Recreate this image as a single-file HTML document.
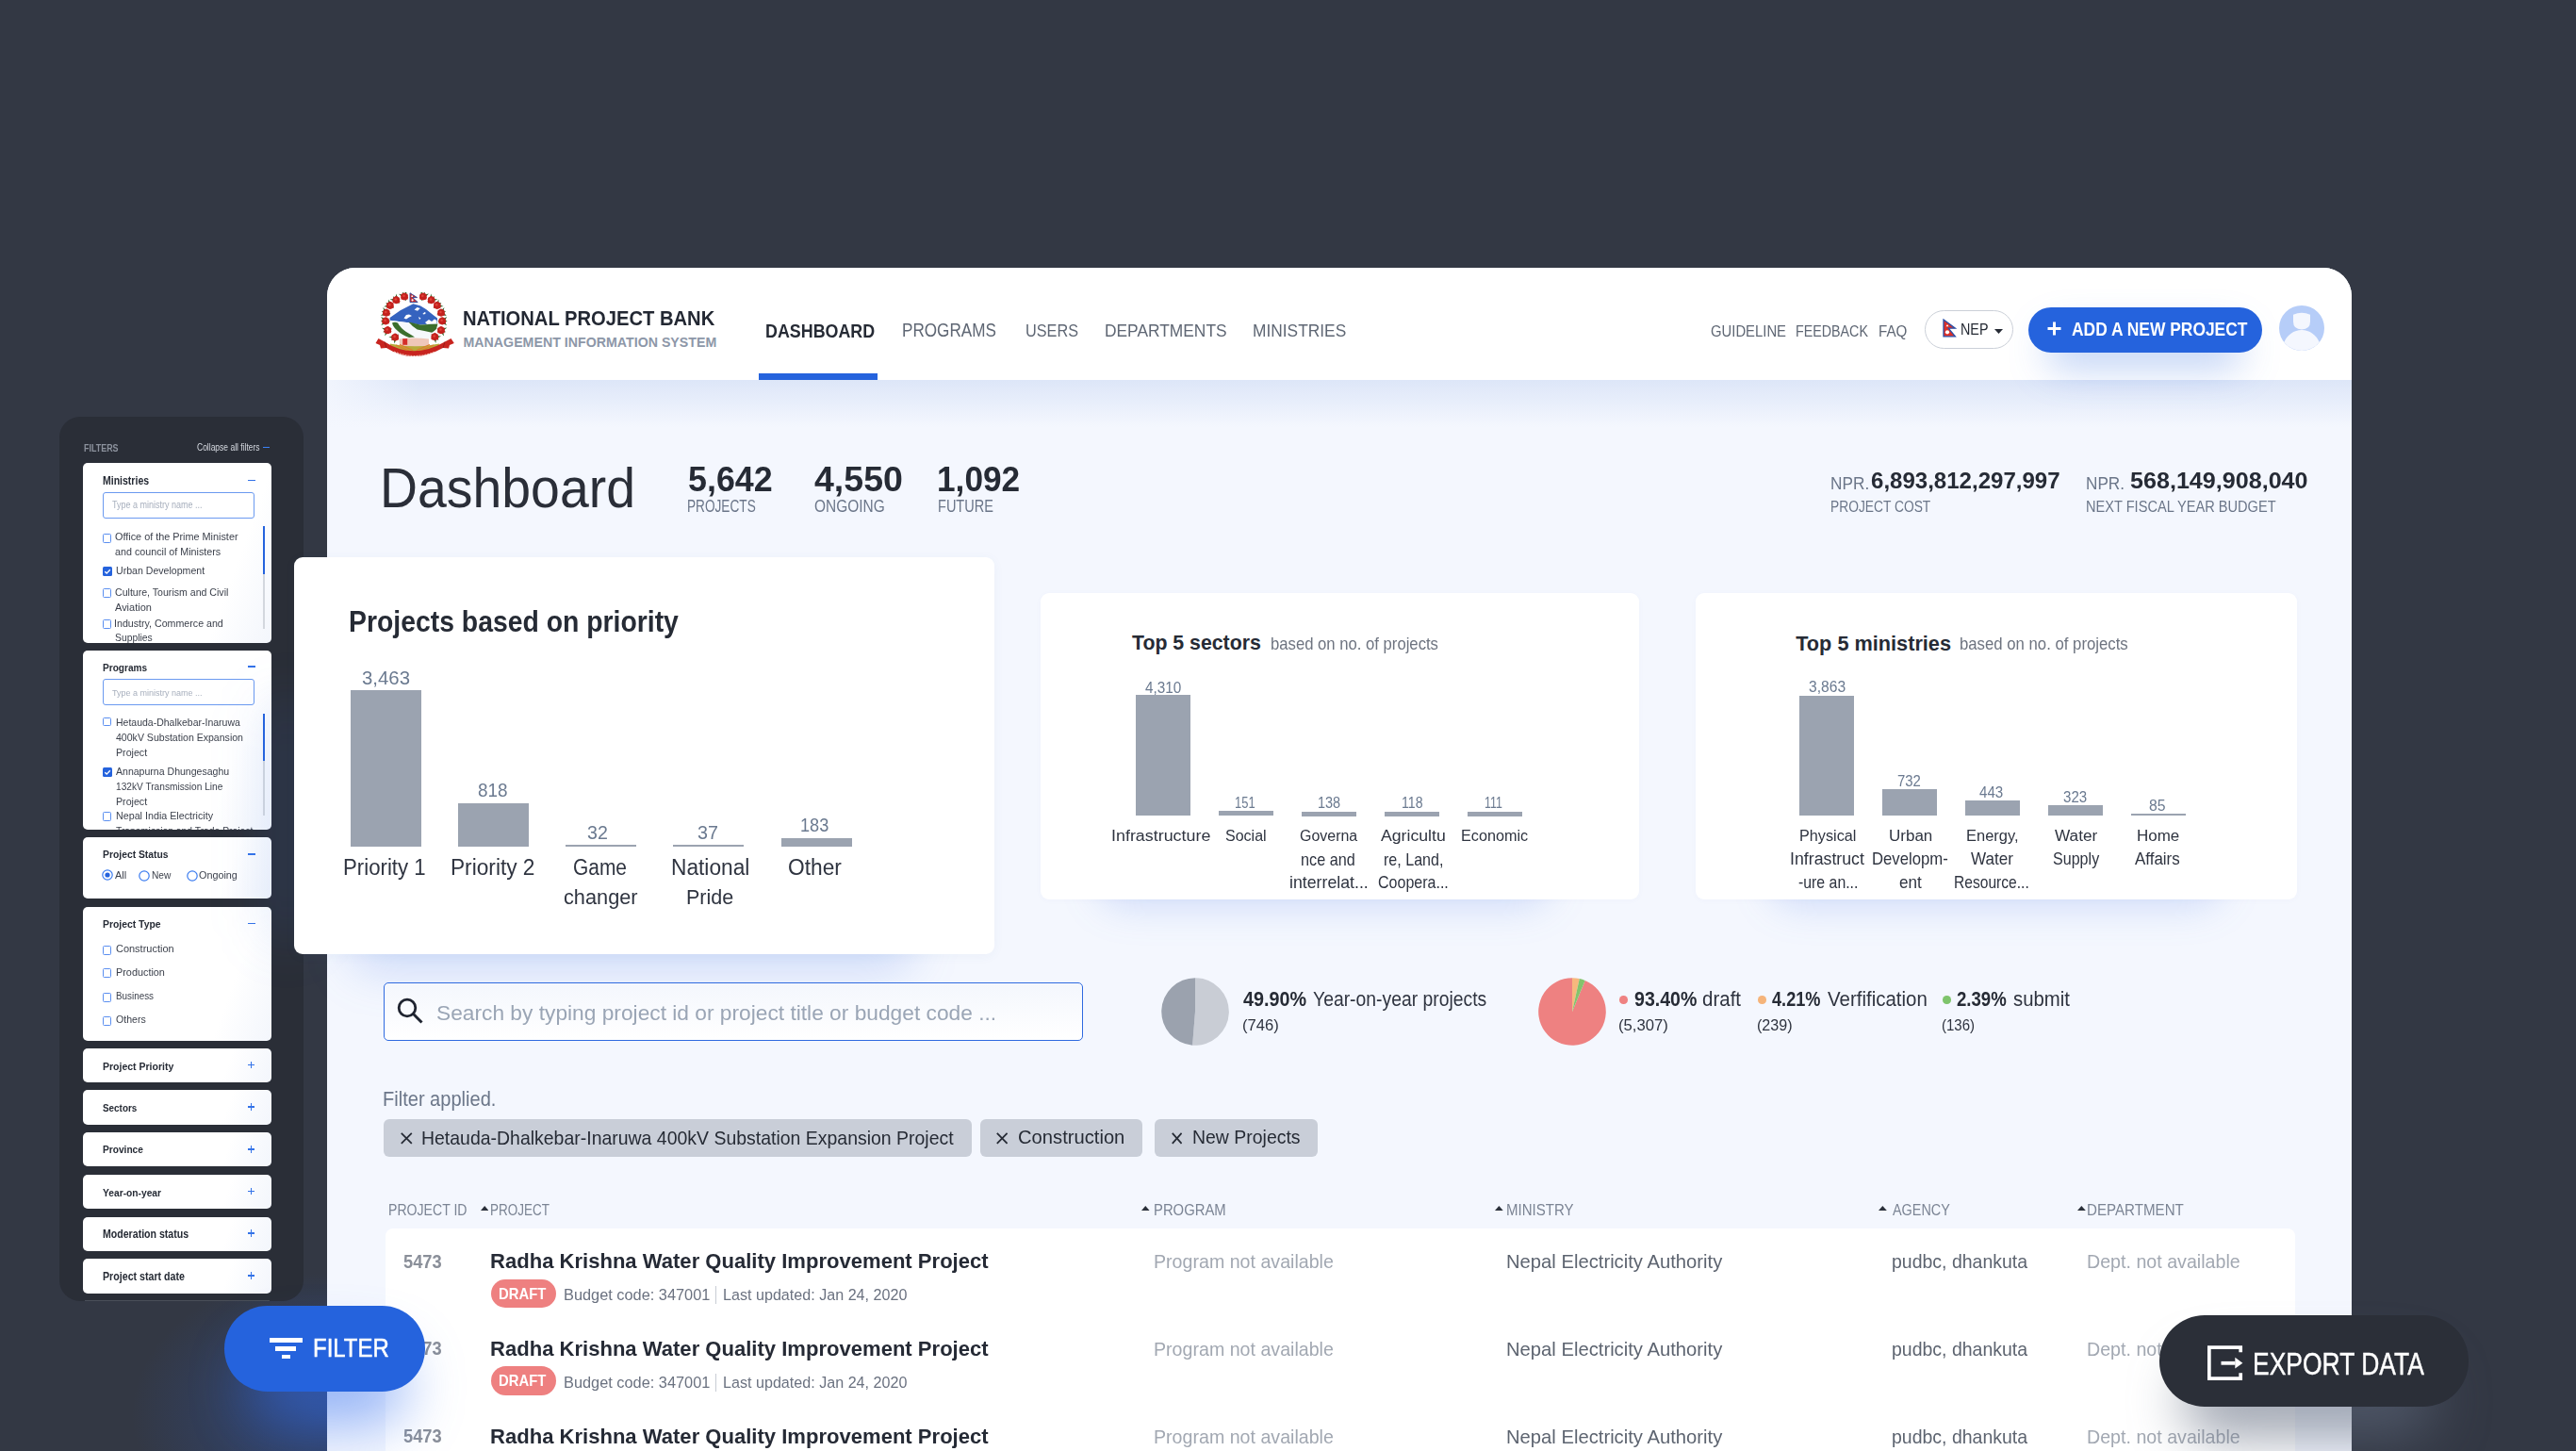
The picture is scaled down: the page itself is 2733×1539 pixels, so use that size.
<!DOCTYPE html>
<html><head><meta charset="utf-8"><style>
html,body{margin:0;padding:0;}
body{width:2733px;height:1539px;overflow:hidden;position:relative;background:#333844;font-family:'Liberation Sans', sans-serif;}
.t{position:absolute;white-space:nowrap;line-height:1;transform-origin:0 0;}
.a{position:absolute;box-sizing:border-box;}
</style></head><body>
<div class="a" style="left:0.0px;top:0.0px;width:2733.0px;height:1539.0px;background:radial-gradient(ellipse 200px 150px at 340px 1500px, rgba(45,90,190,0.42), rgba(45,90,190,0) 100%);"></div>
<div class="a" style="left:347.0px;top:284.0px;width:2148.0px;height:1255.0px;background:#f4f7fe;border-radius:30px 30px 0 0;overflow:hidden;">
<div class="a" style="left:0.0px;top:0.0px;width:2148.0px;height:119.0px;background:#fff;"></div>
<div class="a" style="left:0.0px;top:119.0px;width:2148.0px;height:50.0px;background:linear-gradient(#dde6f8,rgba(244,247,254,0));"></div>
<div class="a" style="left:0.0px;top:119.0px;width:100.0px;height:50.0px;background:linear-gradient(to right,rgba(244,247,254,0.85),rgba(244,247,254,0));"></div>
<div class="a" style="left:458.0px;top:111.5px;width:126.0px;height:7.8px;background:#2563dd;"></div>
</div>
<div class="t" style="left:490.5px;top:327.9px;font-size:21.43px;font-weight:bold;color:#232833;transform:scaleX(0.9422);">NATIONAL PROJECT BANK</div>
<div class="t" style="left:491.5px;top:356.3px;font-size:14.20px;font-weight:bold;color:#8d97a8;letter-spacing:0.01px;">MANAGEMENT INFORMATION SYSTEM</div>
<div class="t" style="left:811.5px;top:340.5px;font-size:20.14px;font-weight:bold;color:#262b35;transform:scaleX(0.8880);">DASHBOARD</div>
<div class="t" style="left:957.1px;top:341.0px;font-size:19.43px;color:#5f6774;transform:scaleX(0.8818);">PROGRAMS</div>
<div class="t" style="left:1087.9px;top:341.2px;font-size:19.14px;color:#5f6774;transform:scaleX(0.8498);">USERS</div>
<div class="t" style="left:1171.6px;top:341.2px;font-size:19.14px;color:#5f6774;transform:scaleX(0.9079);">DEPARTMENTS</div>
<div class="t" style="left:1329.2px;top:341.2px;font-size:19.14px;color:#5f6774;transform:scaleX(0.9063);">MINISTRIES</div>
<div class="t" style="left:1814.9px;top:343.4px;font-size:16.43px;color:#5f6774;transform:scaleX(0.9041);">GUIDELINE</div>
<div class="t" style="left:1905.1px;top:343.4px;font-size:16.43px;color:#5f6774;transform:scaleX(0.8687);">FEEDBACK</div>
<div class="t" style="left:1993.4px;top:343.4px;font-size:16.43px;color:#5f6774;transform:scaleX(0.9241);">FAQ</div>
<div class="a" style="left:2042.0px;top:329.0px;width:94.0px;height:41.0px;border:1.8px solid #cbd0d8;border-radius:21px;background:#fff;"></div>
<svg class="a" style="left:2060.5px;top:338.3px;" width="15" height="20" viewBox="0 0 15 20"><path d="M1 1 L13.4 10.2 H6.2 L13.4 18.8 H1 Z" fill="#dd2f27" stroke="#2a50a8" stroke-width="1.3" stroke-linejoin="miter"/><path d="M5 6 L6.4 8.2 H3.6 Z" fill="#fff"/><circle cx="5" cy="14.3" r="2.1" fill="#fff"/></svg>
<div class="t" style="left:2079.5px;top:342.2px;font-size:16.57px;color:#262b35;transform:scaleX(0.8665);">NEP</div>
<svg class="a" style="left:2116.0px;top:349.0px;" width="9" height="5" viewBox="0 0 9 5"><path d="M0 0 H9 L4.5 5 Z" fill="#262b35"/></svg>
<div class="a" style="left:2170.0px;top:350.0px;width:210.0px;height:40.0px;background:rgba(37,99,221,0.3);filter:blur(20px);border-radius:20px;"></div>
<div class="a" style="left:2152.0px;top:326.0px;width:248.0px;height:48.0px;background:#2563dd;border-radius:24px;"></div>
<svg class="a" style="left:2172.0px;top:341.0px;" width="15" height="15" viewBox="0 0 15 15"><path d="M7.5 0.5 V14.5 M0.5 7.5 H14.5" stroke="#fff" stroke-width="3"/></svg>
<div class="t" style="left:2197.5px;top:339.6px;font-size:19.86px;font-weight:bold;color:#ffffff;transform:scaleX(0.8771);">ADD A NEW PROJECT</div>
<svg class="a" style="left:2418.0px;top:324.0px;" width="48" height="48" viewBox="0 0 48 48"><circle cx="24" cy="24" r="24" fill="#b6cdf8"/><path d="M15 9.8 Q24 5.8 33 9.8 V17 Q33 25.4 24 25.4 Q15 25.4 15 17 Z" fill="#f4f7fe"/><path d="M5.3 39 A20 20 0 0 1 42.7 39 A24 24 0 0 1 5.3 39 Z" fill="#f4f7fe"/></svg>
<svg class="a" style="left:398.0px;top:310.0px;" width="84" height="72" viewBox="0 0 84 72"><path d="M15.6 27 L26.7 19.2 L35.4 14.8 L40.4 12.3 L47.8 14.2 L54 17.9 L60.2 22.9 L66 27.5 L66 33 L47.8 34.7 L35.4 32.2 L19.3 30.3 L15.6 29.7 Z" fill="#3563bf"/><path d="M30.5 27.5 L33 24 L36 23.5 L39 25 L36 26.5 L33 28.5 Z M41.6 18.5 L44.5 16 L47.8 17 L45 19.8 Z M50.3 23 L52.5 21 L54 22 L52 23.5 Z M46 26 L48.5 27.5 L47 29 Z M53 32 L57 29 L60 31 L63 28.5 L65.5 30 L65.5 33 L55 34 Z" fill="#fff"/><path d="M19.3 30.3 L35.4 32.2 L47.8 34.7 L66 33 L62 49 L21 49 Z" fill="#f6f9fc"/><path d="M18 32.5 Q21 31 24 32.5 Q27 38 33 42 Q38 45 42 47.5 L36 48 Q28 45 24 41 Q19 37 18 32.5 Z" fill="#3b6e2c"/><path d="M35.4 31.6 Q42 33 48 34.5 Q57 34 66.4 33.4 L65 39 Q62 42 60.2 42.7 Q52 41 44.7 39.6 Q39 36 35.4 31.6 Z" fill="#3b6e2c"/><path d="M25.5 49.5 Q40 47.5 57 49.5 L57 56.5 Q40 59 26 57 Z" fill="#efc7b9"/><path d="M29.2 49.2 L34.2 49.2 L34.2 55.8 L29.2 55.8 Z" fill="#d42f2b"/><path d="M15.6 54.5 Q42 60 68.3 54.5 Q66 63 56 64 Q42 66 28 64 Q17 63 15.6 54.5 Z" fill="#b7ab3c"/><path d="M22 56 L38 63 M26 55.5 L40 61.5 M62 56 L46 63 M58 55.5 L44 61.5" stroke="#e07a2c" stroke-width="1.3"/><path d="M31.9 2.9 L24.9 1.8 L30.3 6.3 Z" fill="#2e6a2b"/><path d="M32.9 5.3 L33.5 -1.8 L29.3 3.9 Z" fill="#2e6a2b"/><path d="M32.9 3.9 L29.0 -0.5 L29.3 5.3 Z" fill="#2e6a2b"/><path d="M29.3 5.3 L33.0 9.2 L32.9 3.9 Z" fill="#2e6a2b"/><path d="M22.6 6.4 L15.6 7.6 L22.2 10.2 Z" fill="#2e6a2b"/><path d="M24.3 8.4 L22.6 1.5 L20.5 8.2 Z" fill="#2e6a2b"/><path d="M23.8 7.0 L18.8 4.2 L21.0 9.6 Z" fill="#2e6a2b"/><path d="M21.0 9.6 L25.7 12.0 L23.8 7.0 Z" fill="#2e6a2b"/><path d="M15.5 12.1 L9.2 15.3 L16.3 15.9 Z" fill="#2e6a2b"/><path d="M17.7 13.5 L14.1 7.4 L14.1 14.5 Z" fill="#2e6a2b"/><path d="M16.9 12.4 L11.2 11.1 L14.9 15.6 Z" fill="#2e6a2b"/><path d="M14.9 15.6 L20.1 16.6 L16.9 12.4 Z" fill="#2e6a2b"/><path d="M11.0 20.1 L5.9 24.9 L12.8 23.5 Z" fill="#2e6a2b"/><path d="M13.5 20.8 L8.3 16.0 L10.3 22.8 Z" fill="#2e6a2b"/><path d="M12.4 20.0 L6.6 20.3 L11.4 23.6 Z" fill="#2e6a2b"/><path d="M11.4 23.6 L16.7 23.1 L12.4 20.0 Z" fill="#2e6a2b"/><path d="M9.9 29.1 L6.3 35.2 L12.5 31.9 Z" fill="#2e6a2b"/><path d="M12.5 29.1 L6.1 25.9 L9.9 31.9 Z" fill="#2e6a2b"/><path d="M11.2 28.6 L5.7 30.6 L11.2 32.4 Z" fill="#2e6a2b"/><path d="M11.2 32.4 L16.2 30.4 L11.2 28.6 Z" fill="#2e6a2b"/><path d="M11.6 39.4 L10.2 46.4 L15.0 41.2 Z" fill="#2e6a2b"/><path d="M14.0 38.5 L7.0 37.7 L12.6 42.1 Z" fill="#2e6a2b"/><path d="M12.6 38.5 L8.1 42.2 L14.0 42.1 Z" fill="#2e6a2b"/><path d="M14.0 42.1 L18.0 38.6 L12.6 38.5 Z" fill="#2e6a2b"/><path d="M19.3 47.5 L20.5 54.5 L23.1 47.9 Z" fill="#2e6a2b"/><path d="M21.3 45.8 L14.4 47.5 L21.1 49.6 Z" fill="#2e6a2b"/><path d="M20.0 46.3 L17.1 51.3 L22.4 49.1 Z" fill="#2e6a2b"/><path d="M22.5 49.1 L25.0 44.4 L19.9 46.3 Z" fill="#2e6a2b"/><path d="M52.7 3.9 L48.3 -1.7 L49.1 5.3 Z" fill="#2e6a2b"/><path d="M51.8 6.3 L57.0 1.5 L50.0 2.9 Z" fill="#2e6a2b"/><path d="M52.7 5.3 L52.8 -0.6 L49.1 3.9 Z" fill="#2e6a2b"/><path d="M49.1 3.9 L49.2 9.3 L52.7 5.3 Z" fill="#2e6a2b"/><path d="M61.5 8.2 L59.2 1.5 L57.7 8.4 Z" fill="#2e6a2b"/><path d="M59.8 10.2 L66.3 7.4 L59.4 6.4 Z" fill="#2e6a2b"/><path d="M61.1 9.5 L63.1 4.1 L58.1 7.1 Z" fill="#2e6a2b"/><path d="M58.1 7.1 L56.4 12.1 L61.1 9.5 Z" fill="#2e6a2b"/><path d="M67.6 14.4 L67.4 7.4 L64.0 13.6 Z" fill="#2e6a2b"/><path d="M65.5 15.9 L72.5 15.1 L66.1 12.1 Z" fill="#2e6a2b"/><path d="M66.8 15.6 L70.4 11.0 L64.8 12.4 Z" fill="#2e6a2b"/><path d="M64.8 12.4 L61.6 16.8 L66.8 15.6 Z" fill="#2e6a2b"/><path d="M71.6 22.8 L73.5 16.0 L68.4 20.8 Z" fill="#2e6a2b"/><path d="M69.1 23.5 L76.1 24.9 L70.9 20.1 Z" fill="#2e6a2b"/><path d="M70.5 23.6 L75.3 20.3 L69.5 20.0 Z" fill="#2e6a2b"/><path d="M69.5 20.0 L65.2 23.2 L70.5 23.6 Z" fill="#2e6a2b"/><path d="M72.5 31.9 L76.3 25.9 L69.9 29.1 Z" fill="#2e6a2b"/><path d="M69.9 31.9 L76.1 35.2 L72.5 29.1 Z" fill="#2e6a2b"/><path d="M71.2 32.4 L76.7 30.6 L71.2 28.6 Z" fill="#2e6a2b"/><path d="M71.2 28.6 L66.2 30.4 L71.2 32.4 Z" fill="#2e6a2b"/><path d="M70.7 42.0 L76.3 37.6 L69.3 38.6 Z" fill="#2e6a2b"/><path d="M68.3 41.2 L73.1 46.4 L71.7 39.4 Z" fill="#2e6a2b"/><path d="M69.4 42.1 L75.2 42.2 L70.6 38.5 Z" fill="#2e6a2b"/><path d="M70.6 38.5 L65.3 38.6 L69.4 42.1 Z" fill="#2e6a2b"/><path d="M63.5 49.2 L70.1 46.8 L63.1 45.4 Z" fill="#2e6a2b"/><path d="M61.4 47.6 L64.3 54.0 L65.2 47.0 Z" fill="#2e6a2b"/><path d="M62.1 48.8 L67.6 50.7 L64.5 45.8 Z" fill="#2e6a2b"/><path d="M64.5 45.8 L59.4 44.2 L62.1 48.8 Z" fill="#2e6a2b"/><circle cx="29.5" cy="3.5" r="2.2" fill="#c4221e"/><circle cx="32.7" cy="3.5" r="2.2" fill="#c4221e"/><circle cx="31.1" cy="2.6" r="2.2" fill="#c4221e"/><circle cx="29.3" cy="5.7" r="2.2" fill="#c4221e"/><circle cx="32.9" cy="5.7" r="2.2" fill="#c4221e"/><circle cx="31.1" cy="6.3" r="2.2" fill="#c4221e"/><circle cx="31.1" cy="4.6" r="2.2" fill="#c4221e"/><circle cx="30.5" cy="3.8" r="1.3" fill="#e0443a"/><circle cx="20.8" cy="7.2" r="2.2" fill="#c4221e"/><circle cx="24.0" cy="7.2" r="2.2" fill="#c4221e"/><circle cx="22.4" cy="6.3" r="2.2" fill="#c4221e"/><circle cx="20.6" cy="9.4" r="2.2" fill="#c4221e"/><circle cx="24.2" cy="9.4" r="2.2" fill="#c4221e"/><circle cx="22.4" cy="10.0" r="2.2" fill="#c4221e"/><circle cx="22.4" cy="8.3" r="2.2" fill="#c4221e"/><circle cx="21.8" cy="7.5" r="1.3" fill="#e0443a"/><circle cx="14.3" cy="12.9" r="2.2" fill="#c4221e"/><circle cx="17.5" cy="12.9" r="2.2" fill="#c4221e"/><circle cx="15.9" cy="12.0" r="2.2" fill="#c4221e"/><circle cx="14.1" cy="15.1" r="2.2" fill="#c4221e"/><circle cx="17.7" cy="15.1" r="2.2" fill="#c4221e"/><circle cx="15.9" cy="15.7" r="2.2" fill="#c4221e"/><circle cx="15.9" cy="14.0" r="2.2" fill="#c4221e"/><circle cx="15.3" cy="13.2" r="1.3" fill="#e0443a"/><circle cx="10.3" cy="20.7" r="2.2" fill="#c4221e"/><circle cx="13.5" cy="20.7" r="2.2" fill="#c4221e"/><circle cx="11.9" cy="19.8" r="2.2" fill="#c4221e"/><circle cx="10.1" cy="22.9" r="2.2" fill="#c4221e"/><circle cx="13.7" cy="22.9" r="2.2" fill="#c4221e"/><circle cx="11.9" cy="23.5" r="2.2" fill="#c4221e"/><circle cx="11.9" cy="21.8" r="2.2" fill="#c4221e"/><circle cx="11.3" cy="21.0" r="1.3" fill="#e0443a"/><circle cx="9.6" cy="29.4" r="2.2" fill="#c4221e"/><circle cx="12.8" cy="29.4" r="2.2" fill="#c4221e"/><circle cx="11.2" cy="28.5" r="2.2" fill="#c4221e"/><circle cx="9.4" cy="31.6" r="2.2" fill="#c4221e"/><circle cx="13.0" cy="31.6" r="2.2" fill="#c4221e"/><circle cx="11.2" cy="32.2" r="2.2" fill="#c4221e"/><circle cx="11.2" cy="30.5" r="2.2" fill="#c4221e"/><circle cx="10.6" cy="29.7" r="1.3" fill="#e0443a"/><circle cx="11.7" cy="39.2" r="2.2" fill="#c4221e"/><circle cx="14.9" cy="39.2" r="2.2" fill="#c4221e"/><circle cx="13.3" cy="38.3" r="2.2" fill="#c4221e"/><circle cx="11.5" cy="41.4" r="2.2" fill="#c4221e"/><circle cx="15.1" cy="41.4" r="2.2" fill="#c4221e"/><circle cx="13.3" cy="42.0" r="2.2" fill="#c4221e"/><circle cx="13.3" cy="40.3" r="2.2" fill="#c4221e"/><circle cx="12.7" cy="39.5" r="1.3" fill="#e0443a"/><circle cx="19.6" cy="46.6" r="2.2" fill="#c4221e"/><circle cx="22.8" cy="46.6" r="2.2" fill="#c4221e"/><circle cx="21.2" cy="45.7" r="2.2" fill="#c4221e"/><circle cx="19.4" cy="48.8" r="2.2" fill="#c4221e"/><circle cx="23.0" cy="48.8" r="2.2" fill="#c4221e"/><circle cx="21.2" cy="49.4" r="2.2" fill="#c4221e"/><circle cx="21.2" cy="47.7" r="2.2" fill="#c4221e"/><circle cx="20.6" cy="46.9" r="1.3" fill="#e0443a"/><circle cx="49.3" cy="3.5" r="2.2" fill="#c4221e"/><circle cx="52.5" cy="3.5" r="2.2" fill="#c4221e"/><circle cx="50.9" cy="2.6" r="2.2" fill="#c4221e"/><circle cx="49.1" cy="5.7" r="2.2" fill="#c4221e"/><circle cx="52.7" cy="5.7" r="2.2" fill="#c4221e"/><circle cx="50.9" cy="6.3" r="2.2" fill="#c4221e"/><circle cx="50.9" cy="4.6" r="2.2" fill="#c4221e"/><circle cx="50.3" cy="3.8" r="1.3" fill="#e0443a"/><circle cx="58.0" cy="7.2" r="2.2" fill="#c4221e"/><circle cx="61.2" cy="7.2" r="2.2" fill="#c4221e"/><circle cx="59.6" cy="6.3" r="2.2" fill="#c4221e"/><circle cx="57.8" cy="9.4" r="2.2" fill="#c4221e"/><circle cx="61.4" cy="9.4" r="2.2" fill="#c4221e"/><circle cx="59.6" cy="10.0" r="2.2" fill="#c4221e"/><circle cx="59.6" cy="8.3" r="2.2" fill="#c4221e"/><circle cx="59.0" cy="7.5" r="1.3" fill="#e0443a"/><circle cx="64.2" cy="12.9" r="2.2" fill="#c4221e"/><circle cx="67.4" cy="12.9" r="2.2" fill="#c4221e"/><circle cx="65.8" cy="12.0" r="2.2" fill="#c4221e"/><circle cx="64.0" cy="15.1" r="2.2" fill="#c4221e"/><circle cx="67.6" cy="15.1" r="2.2" fill="#c4221e"/><circle cx="65.8" cy="15.7" r="2.2" fill="#c4221e"/><circle cx="65.8" cy="14.0" r="2.2" fill="#c4221e"/><circle cx="65.2" cy="13.2" r="1.3" fill="#e0443a"/><circle cx="68.4" cy="20.7" r="2.2" fill="#c4221e"/><circle cx="71.6" cy="20.7" r="2.2" fill="#c4221e"/><circle cx="70.0" cy="19.8" r="2.2" fill="#c4221e"/><circle cx="68.2" cy="22.9" r="2.2" fill="#c4221e"/><circle cx="71.8" cy="22.9" r="2.2" fill="#c4221e"/><circle cx="70.0" cy="23.5" r="2.2" fill="#c4221e"/><circle cx="70.0" cy="21.8" r="2.2" fill="#c4221e"/><circle cx="69.4" cy="21.0" r="1.3" fill="#e0443a"/><circle cx="69.6" cy="29.4" r="2.2" fill="#c4221e"/><circle cx="72.8" cy="29.4" r="2.2" fill="#c4221e"/><circle cx="71.2" cy="28.5" r="2.2" fill="#c4221e"/><circle cx="69.4" cy="31.6" r="2.2" fill="#c4221e"/><circle cx="73.0" cy="31.6" r="2.2" fill="#c4221e"/><circle cx="71.2" cy="32.2" r="2.2" fill="#c4221e"/><circle cx="71.2" cy="30.5" r="2.2" fill="#c4221e"/><circle cx="70.6" cy="29.7" r="1.3" fill="#e0443a"/><circle cx="68.4" cy="39.2" r="2.2" fill="#c4221e"/><circle cx="71.6" cy="39.2" r="2.2" fill="#c4221e"/><circle cx="70.0" cy="38.3" r="2.2" fill="#c4221e"/><circle cx="68.2" cy="41.4" r="2.2" fill="#c4221e"/><circle cx="71.8" cy="41.4" r="2.2" fill="#c4221e"/><circle cx="70.0" cy="42.0" r="2.2" fill="#c4221e"/><circle cx="70.0" cy="40.3" r="2.2" fill="#c4221e"/><circle cx="69.4" cy="39.5" r="1.3" fill="#e0443a"/><circle cx="61.7" cy="46.2" r="2.2" fill="#c4221e"/><circle cx="64.9" cy="46.2" r="2.2" fill="#c4221e"/><circle cx="63.3" cy="45.3" r="2.2" fill="#c4221e"/><circle cx="61.5" cy="48.4" r="2.2" fill="#c4221e"/><circle cx="65.1" cy="48.4" r="2.2" fill="#c4221e"/><circle cx="63.3" cy="49.0" r="2.2" fill="#c4221e"/><circle cx="63.3" cy="47.3" r="2.2" fill="#c4221e"/><circle cx="62.7" cy="46.5" r="1.3" fill="#e0443a"/><path d="M0.5 54 L3.5 49 L10 52.5 Q40 72 74 52.5 L80.5 49 L83.8 54 L79 56 L78 59.5 L72 59 Q40 77 12 59 L6 59.5 L5 56 Z" fill="#c8241f"/><path d="M12 59 L10 52.5 M72 59 L74 52.5" stroke="#8e1815" stroke-width="0.8"/><path d="M20 63 Q42 72 64 63" stroke="#f2c9c0" stroke-width="1.1" stroke-dasharray="2 1" fill="none"/><path d="M37 0.8 L37 10.6 L45.2 10.6 L39.6 5.6 L44.5 5.6 Z" fill="#d42d2a" stroke="#2a4a9a" stroke-width="0.9"/><circle cx="39.2" cy="4.2" r="0.9" fill="#fff"/><circle cx="39.6" cy="8.3" r="1.1" fill="#fff"/></svg>
<div class="a" style="left:63.0px;top:442.0px;width:259.0px;height:938.0px;background:#2a2e37;border-radius:22px;"></div>
<div class="t" style="left:88.5px;top:469.6px;font-size:11.43px;font-weight:bold;color:#8c929d;transform:scaleX(0.7818);">FILTERS</div>
<div class="t" style="left:209.4px;top:469.5px;font-size:10.00px;color:#d6dae1;transform:scaleX(0.8499);">Collapse all filters</div>
<div class="a" style="left:279.0px;top:473.5px;width:7.0px;height:1.6px;background:#3b82f6;"></div>
<div class="a" style="left:88.0px;top:491.0px;width:200.0px;height:191.0px;background:linear-gradient(110deg,#fff 75%,#f3f6fc);border-radius:5px;"></div>
<div class="t" style="left:108.8px;top:504.2px;font-size:12.43px;font-weight:bold;color:#262b35;transform:scaleX(0.8464);">Ministries</div>
<div class="a" style="left:263.0px;top:508.8px;width:7.5px;height:1.5px;background:#3473e8;"></div>
<div class="a" style="left:108.6px;top:521.5px;width:161.6px;height:28.1px;border:1.4px solid #6b9af0;border-radius:3px;background:#fff;"></div>
<div class="t" style="left:119.4px;top:530.8px;font-size:10.14px;color:#a7afbd;transform:scaleX(0.8897);">Type a ministry name ...</div>
<div class="a" style="left:88.0px;top:552.0px;width:200.0px;height:130.0px;overflow:hidden;">
<div class="a" style="left:20.6px;top:14.0px;width:9.8px;height:9.8px;border:1.3px solid #5b8ff0;border-radius:1.5px;background:#fff;"></div>
<div class="t" style="left:33.6px;top:12.2px;font-size:11.14px;color:#3a3f4a;transform:scaleX(0.9743);">Office of the Prime Minister</div>
<div class="t" style="left:33.6px;top:28.0px;font-size:11.14px;color:#3a3f4a;transform:scaleX(0.9650);">and council of Ministers</div>
<svg class="a" style="left:20.6px;top:49.2px;" width="10" height="10" viewBox="0 0 10 10"><rect x="0" y="0" width="10" height="10" rx="1.5" fill="#2563dd"/><path d="M2.3 5.2 L4.2 7.1 L7.8 3.2" stroke="#fff" stroke-width="1.4" fill="none"/></svg>
<div class="t" style="left:34.6px;top:47.8px;font-size:11.43px;color:#3a3f4a;transform:scaleX(0.9269);">Urban Development</div>
<div class="a" style="left:20.6px;top:72.4px;width:9.8px;height:9.8px;border:1.3px solid #5b8ff0;border-radius:1.5px;background:#fff;"></div>
<div class="t" style="left:33.6px;top:70.3px;font-size:11.71px;color:#3a3f4a;transform:scaleX(0.9041);">Culture, Tourism and Civil</div>
<div class="t" style="left:33.6px;top:86.6px;font-size:11.14px;color:#3a3f4a;transform:scaleX(0.9875);">Aviation</div>
<div class="a" style="left:20.6px;top:105.0px;width:9.8px;height:9.8px;border:1.3px solid #5b8ff0;border-radius:1.5px;background:#fff;"></div>
<div class="t" style="left:32.7px;top:102.9px;font-size:11.71px;color:#3a3f4a;transform:scaleX(0.9097);">Industry, Commerce and</div>
<div class="t" style="left:33.6px;top:119.3px;font-size:10.57px;color:#3a3f4a;transform:scaleX(0.9792);">Supplies</div>
</div>
<div class="a" style="left:279.4px;top:558.4px;width:1.6px;height:108.3px;background:#d3d7de;"></div>
<div class="a" style="left:279.4px;top:558.4px;width:1.6px;height:50.2px;background:#2563dd;"></div>
<div class="a" style="left:88.0px;top:690.0px;width:200.0px;height:190.0px;background:linear-gradient(110deg,#fff 75%,#f3f6fc);border-radius:5px;"></div>
<div class="t" style="left:108.8px;top:703.4px;font-size:10.57px;font-weight:bold;color:#262b35;transform:scaleX(0.9548);">Programs</div>
<div class="a" style="left:263.0px;top:706.1px;width:7.5px;height:1.5px;background:#3473e8;"></div>
<div class="a" style="left:108.6px;top:720.3px;width:161.6px;height:27.9px;border:1.4px solid #6b9af0;border-radius:3px;background:#fff;"></div>
<div class="t" style="left:119.4px;top:729.5px;font-size:9.86px;color:#a7afbd;transform:scaleX(0.9147);">Type a ministry name ...</div>
<div class="a" style="left:88.0px;top:752.0px;width:200.0px;height:128.0px;overflow:hidden;">
<div class="a" style="left:20.6px;top:8.7px;width:9.8px;height:9.8px;border:1.3px solid #5b8ff0;border-radius:1.5px;background:#fff;"></div>
<div class="t" style="left:34.6px;top:9.0px;font-size:11.14px;color:#3a3f4a;transform:scaleX(0.9433);">Hetauda-Dhalkebar-Inaruwa</div>
<div class="t" style="left:34.6px;top:24.8px;font-size:11.14px;color:#3a3f4a;transform:scaleX(0.9489);">400kV Substation Expansion</div>
<div class="t" style="left:34.6px;top:41.0px;font-size:10.86px;color:#3a3f4a;transform:scaleX(0.9811);">Project</div>
<svg class="a" style="left:20.6px;top:62.3px;" width="10" height="10" viewBox="0 0 10 10"><rect x="0" y="0" width="10" height="10" rx="1.5" fill="#2563dd"/><path d="M2.3 5.2 L4.2 7.1 L7.8 3.2" stroke="#fff" stroke-width="1.4" fill="none"/></svg>
<div class="t" style="left:34.6px;top:61.1px;font-size:11.14px;color:#3a3f4a;transform:scaleX(0.9477);">Annapurna Dhungesaghu</div>
<div class="t" style="left:34.6px;top:76.9px;font-size:11.14px;color:#3a3f4a;transform:scaleX(0.9123);">132kV Transmission Line</div>
<div class="t" style="left:34.6px;top:93.1px;font-size:10.86px;color:#3a3f4a;transform:scaleX(0.9811);">Project</div>
<div class="a" style="left:20.6px;top:108.8px;width:9.8px;height:9.8px;border:1.3px solid #5b8ff0;border-radius:1.5px;background:#fff;"></div>
<div class="t" style="left:34.6px;top:107.8px;font-size:11.43px;color:#3a3f4a;transform:scaleX(0.9384);">Nepal India Electricity</div>
<div class="t" style="left:34.6px;top:123.6px;font-size:11.43px;color:#3a3f4a;transform:scaleX(0.9033);">Transmission and Trade Project</div>
</div>
<div class="a" style="left:279.4px;top:756.6px;width:1.6px;height:108.4px;background:#d3d7de;"></div>
<div class="a" style="left:279.4px;top:756.6px;width:1.6px;height:50.2px;background:#2563dd;"></div>
<div class="a" style="left:88.0px;top:888.0px;width:200.0px;height:65.0px;background:linear-gradient(110deg,#fff 75%,#f3f6fc);border-radius:5px;"></div>
<div class="t" style="left:108.8px;top:901.0px;font-size:11.57px;font-weight:bold;color:#262b35;transform:scaleX(0.8950);">Project Status</div>
<div class="a" style="left:263.0px;top:905.2px;width:7.5px;height:1.5px;background:#3473e8;"></div>
<svg class="a" style="left:108.0px;top:922.0px;" width="12" height="12" viewBox="0 0 12 12"><circle cx="6" cy="6" r="5.2" fill="#fff" stroke="#3b7cf0" stroke-width="1.2"/><circle cx="6" cy="6" r="2.6" fill="#2563dd"/></svg>
<div class="t" style="left:121.6px;top:923.1px;font-size:11.43px;color:#3a3f4a;transform:scaleX(0.9554);">All</div>
<svg class="a" style="left:147.0px;top:922.7px;" width="12" height="12" viewBox="0 0 12 12"><circle cx="6" cy="6" r="5.2" fill="#fff" stroke="#3b7cf0" stroke-width="1.2"/></svg>
<div class="t" style="left:160.7px;top:923.1px;font-size:11.43px;color:#3a3f4a;transform:scaleX(0.8906);">New</div>
<svg class="a" style="left:197.5px;top:922.7px;" width="12" height="12" viewBox="0 0 12 12"><circle cx="6" cy="6" r="5.2" fill="#fff" stroke="#3b7cf0" stroke-width="1.2"/></svg>
<div class="t" style="left:211.0px;top:923.1px;font-size:11.43px;color:#3a3f4a;transform:scaleX(0.9467);">Ongoing</div>
<div class="a" style="left:88.0px;top:962.0px;width:200.0px;height:141.5px;background:linear-gradient(110deg,#fff 75%,#f3f6fc);border-radius:5px;"></div>
<div class="t" style="left:108.8px;top:975.3px;font-size:11.43px;font-weight:bold;color:#262b35;transform:scaleX(0.9098);">Project Type</div>
<div class="a" style="left:263.0px;top:978.5px;width:7.5px;height:1.5px;background:#3473e8;"></div>
<div class="a" style="left:108.6px;top:1003.0px;width:9.8px;height:9.8px;border:1.3px solid #5b8ff0;border-radius:1.5px;background:#fff;"></div>
<div class="t" style="left:122.6px;top:1001.1px;font-size:11.14px;color:#3a3f4a;transform:scaleX(0.9861);">Construction</div>
<div class="a" style="left:108.6px;top:1027.2px;width:9.8px;height:9.8px;border:1.3px solid #5b8ff0;border-radius:1.5px;background:#fff;"></div>
<div class="t" style="left:122.6px;top:1026.2px;font-size:11.14px;color:#3a3f4a;transform:scaleX(0.9755);">Production</div>
<div class="a" style="left:108.6px;top:1052.9px;width:9.8px;height:9.8px;border:1.3px solid #5b8ff0;border-radius:1.5px;background:#fff;"></div>
<div class="t" style="left:122.6px;top:1051.3px;font-size:11.14px;color:#3a3f4a;transform:scaleX(0.8864);">Business</div>
<div class="a" style="left:108.6px;top:1078.0px;width:9.8px;height:9.8px;border:1.3px solid #5b8ff0;border-radius:1.5px;background:#fff;"></div>
<div class="t" style="left:122.6px;top:1076.4px;font-size:11.14px;color:#3a3f4a;transform:scaleX(0.9490);">Others</div>
<div class="a" style="left:88.0px;top:1112.0px;width:200.0px;height:36.0px;background:linear-gradient(110deg,#fff 75%,#f3f6fc);border-radius:5px;"></div>
<div class="t" style="left:108.6px;top:1124.7px;font-size:11.71px;font-weight:bold;color:#262b35;transform:scaleX(0.8970);">Project Priority</div>
<div class="a" style="left:262.8px;top:1128.8px;width:7.6px;height:1.5px;background:#3473e8;"></div>
<div class="a" style="left:265.9px;top:1125.7px;width:1.5px;height:7.6px;background:#3473e8;"></div>
<div class="a" style="left:88.0px;top:1156.0px;width:200.0px;height:37.0px;background:linear-gradient(110deg,#fff 75%,#f3f6fc);border-radius:5px;"></div>
<div class="t" style="left:108.6px;top:1169.3px;font-size:11.71px;font-weight:bold;color:#262b35;transform:scaleX(0.8452);">Sectors</div>
<div class="a" style="left:262.8px;top:1173.3px;width:7.6px;height:1.5px;background:#3473e8;"></div>
<div class="a" style="left:265.9px;top:1170.3px;width:1.5px;height:7.6px;background:#3473e8;"></div>
<div class="a" style="left:88.0px;top:1201.0px;width:200.0px;height:36.4px;background:linear-gradient(110deg,#fff 75%,#f3f6fc);border-radius:5px;"></div>
<div class="t" style="left:108.6px;top:1214.2px;font-size:11.29px;font-weight:bold;color:#262b35;transform:scaleX(0.9002);">Province</div>
<div class="a" style="left:262.8px;top:1218.1px;width:7.6px;height:1.5px;background:#3473e8;"></div>
<div class="a" style="left:265.9px;top:1215.0px;width:1.5px;height:7.6px;background:#3473e8;"></div>
<div class="a" style="left:88.0px;top:1246.0px;width:200.0px;height:36.2px;background:linear-gradient(110deg,#fff 75%,#f3f6fc);border-radius:5px;"></div>
<div class="t" style="left:108.6px;top:1258.6px;font-size:11.71px;font-weight:bold;color:#262b35;transform:scaleX(0.8746);">Year-on-year</div>
<div class="a" style="left:262.8px;top:1262.7px;width:7.6px;height:1.5px;background:#3473e8;"></div>
<div class="a" style="left:265.9px;top:1259.6px;width:1.5px;height:7.6px;background:#3473e8;"></div>
<div class="a" style="left:88.0px;top:1290.7px;width:200.0px;height:36.3px;background:linear-gradient(110deg,#fff 75%,#f3f6fc);border-radius:5px;"></div>
<div class="t" style="left:108.6px;top:1303.1px;font-size:12.00px;font-weight:bold;color:#262b35;transform:scaleX(0.8817);">Moderation status</div>
<div class="a" style="left:262.8px;top:1307.3px;width:7.6px;height:1.5px;background:#3473e8;"></div>
<div class="a" style="left:265.9px;top:1304.3px;width:1.5px;height:7.6px;background:#3473e8;"></div>
<div class="a" style="left:88.0px;top:1335.3px;width:200.0px;height:36.4px;background:linear-gradient(110deg,#fff 75%,#f3f6fc);border-radius:5px;"></div>
<div class="t" style="left:108.6px;top:1347.7px;font-size:12.43px;font-weight:bold;color:#262b35;transform:scaleX(0.8575);">Project start date</div>
<div class="a" style="left:262.8px;top:1352.1px;width:7.6px;height:1.5px;background:#3473e8;"></div>
<div class="a" style="left:265.9px;top:1349.0px;width:1.5px;height:7.6px;background:#3473e8;"></div>
<div class="a" style="left:90.0px;top:1378.5px;width:196.0px;height:1.2px;background:#4a4f59;"></div>
<div class="t" style="left:403.0px;top:488.9px;font-size:58.57px;color:#2a2e38;transform:scaleX(0.9458);">Dashboard</div>
<div class="t" style="left:730.3px;top:490.7px;font-size:36.00px;font-weight:bold;color:#262b35;transform:scaleX(0.9958);">5,642</div>
<div class="t" style="left:729.2px;top:529.3px;font-size:17.57px;color:#6b7689;transform:scaleX(0.7764);">PROJECTS</div>
<div class="t" style="left:864.2px;top:490.7px;font-size:36.00px;font-weight:bold;color:#262b35;transform:scaleX(1.0419);">4,550</div>
<div class="t" style="left:864.2px;top:529.3px;font-size:17.57px;color:#6b7689;transform:scaleX(0.8798);">ONGOING</div>
<div class="t" style="left:994.0px;top:490.7px;font-size:36.00px;font-weight:bold;color:#262b35;transform:scaleX(0.9786);">1,092</div>
<div class="t" style="left:995.2px;top:529.3px;font-size:17.57px;color:#6b7689;transform:scaleX(0.8273);">FUTURE</div>
<div class="t" style="left:1941.9px;top:503.9px;font-size:18.57px;color:#6b7689;transform:scaleX(0.9291);">NPR.</div>
<div class="t" style="left:1984.5px;top:497.9px;font-size:24.14px;font-weight:bold;color:#262b35;transform:scaleX(0.9969);">6,893,812,297,997</div>
<div class="t" style="left:1942.0px;top:530.0px;font-size:16.57px;color:#6b7689;transform:scaleX(0.8329);">PROJECT COST</div>
<div class="t" style="left:2213.1px;top:503.9px;font-size:18.57px;color:#6b7689;transform:scaleX(0.9244);">NPR.</div>
<div class="t" style="left:2259.6px;top:497.9px;font-size:24.14px;font-weight:bold;color:#262b35;transform:scaleX(1.0410);">568,149,908,040</div>
<div class="t" style="left:2213.1px;top:530.0px;font-size:16.57px;color:#6b7689;transform:scaleX(0.8809);">NEXT FISCAL YEAR BUDGET</div>
<div class="a" style="left:1165.0px;top:900.0px;width:480.0px;height:60.0px;background:rgba(70,120,230,0.22);filter:blur(20px);border-radius:30px;"></div>
<div class="a" style="left:1878.0px;top:900.0px;width:480.0px;height:60.0px;background:rgba(70,120,230,0.22);filter:blur(20px);border-radius:30px;"></div>
<div class="a" style="left:1104.0px;top:629.0px;width:635.0px;height:325.0px;background:#fff;border-radius:9px;box-shadow:0 1px 6px rgba(80,110,180,0.03);"></div>
<div class="a" style="left:1799.0px;top:629.0px;width:638.0px;height:325.0px;background:#fff;border-radius:9px;box-shadow:0 1px 6px rgba(80,110,180,0.03);"></div>
<div class="t" style="left:1201.0px;top:672.0px;font-size:21.29px;font-weight:bold;color:#262b35;">Top 5 sectors</div>
<div class="t" style="left:1347.9px;top:674.3px;font-size:18.57px;color:#6e7480;transform:scaleX(0.8981);">based on no. of projects</div>
<div class="a" style="left:1205.0px;top:737.3px;width:58.2px;height:128.2px;background:#9ba3b0;"></div>
<div class="a" style="left:1293.0px;top:859.6px;width:57.8px;height:5.9px;background:#9ba3b0;"></div>
<div class="a" style="left:1381.3px;top:861.0px;width:57.7px;height:4.5px;background:#9ba3b0;"></div>
<div class="a" style="left:1469.2px;top:861.0px;width:57.9px;height:4.5px;background:#9ba3b0;"></div>
<div class="a" style="left:1557.0px;top:861.0px;width:58.2px;height:4.5px;background:#9ba3b0;"></div>
<div class="t" style="left:1214.8px;top:720.9px;font-size:16.43px;color:#6b7a90;transform:scaleX(0.9333);">4,310</div>
<div class="t" style="left:1310.1px;top:843.1px;font-size:16.43px;color:#6b7a90;transform:scaleX(0.7886);">151</div>
<div class="t" style="left:1397.8px;top:844.3px;font-size:16.57px;color:#6b7a90;transform:scaleX(0.8743);">138</div>
<div class="t" style="left:1487.0px;top:844.3px;font-size:16.57px;color:#6b7a90;transform:scaleX(0.8534);">118</div>
<div class="t" style="left:1575.2px;top:844.3px;font-size:16.57px;color:#6b7a90;transform:scaleX(0.7512);">111</div>
<div class="t" style="left:1179.4px;top:878.3px;font-size:17.29px;color:#2f3440;transform:scaleX(1.0348);">Infrastructure</div>
<div class="t" style="left:1299.6px;top:878.3px;font-size:17.29px;color:#2f3440;transform:scaleX(0.9266);">Social</div>
<div class="t" style="left:1378.7px;top:878.3px;font-size:17.29px;color:#2f3440;transform:scaleX(0.9232);">Governa</div>
<div class="t" style="left:1380.4px;top:901.6px;font-size:19.00px;color:#2f3440;transform:scaleX(0.8539);">nce and</div>
<div class="t" style="left:1367.8px;top:926.6px;font-size:18.57px;color:#2f3440;transform:scaleX(0.9552);">interrelat...</div>
<div class="t" style="left:1464.6px;top:878.3px;font-size:17.29px;color:#2f3440;transform:scaleX(1.0230);">Agricultu</div>
<div class="t" style="left:1467.9px;top:901.6px;font-size:19.00px;color:#2f3440;transform:scaleX(0.8457);">re, Land,</div>
<div class="t" style="left:1462.0px;top:926.6px;font-size:18.57px;color:#2f3440;transform:scaleX(0.8630);">Coopera...</div>
<div class="t" style="left:1549.5px;top:878.3px;font-size:17.29px;color:#2f3440;transform:scaleX(0.9378);">Economic</div>
<div class="t" style="left:1905.2px;top:671.8px;font-size:21.71px;font-weight:bold;color:#262b35;">Top 5 ministries</div>
<div class="t" style="left:2078.6px;top:674.2px;font-size:18.86px;color:#6e7480;transform:scaleX(0.8878);">based on no. of projects</div>
<div class="a" style="left:1909.0px;top:737.6px;width:58.4px;height:127.9px;background:#9ba3b0;"></div>
<div class="a" style="left:1997.0px;top:837.2px;width:58.3px;height:28.3px;background:#9ba3b0;"></div>
<div class="a" style="left:2085.2px;top:849.4px;width:58.0px;height:16.1px;background:#9ba3b0;"></div>
<div class="a" style="left:2173.0px;top:853.8px;width:58.4px;height:11.7px;background:#9ba3b0;"></div>
<div class="a" style="left:2261.3px;top:862.7px;width:58.0px;height:2.8px;background:#9ba3b0;"></div>
<div class="t" style="left:1918.7px;top:721.2px;font-size:15.57px;color:#6b7a90;transform:scaleX(1.0055);">3,863</div>
<div class="t" style="left:2012.9px;top:821.3px;font-size:15.71px;color:#6b7a90;transform:scaleX(0.9503);">732</div>
<div class="t" style="left:2099.5px;top:833.0px;font-size:15.71px;color:#6b7a90;transform:scaleX(0.9635);">443</div>
<div class="t" style="left:2188.7px;top:837.5px;font-size:15.57px;color:#6b7a90;transform:scaleX(0.9680);">323</div>
<div class="t" style="left:2279.7px;top:846.6px;font-size:15.57px;color:#6b7a90;transform:scaleX(1.0147);">85</div>
<div class="t" style="left:1908.7px;top:878.4px;font-size:17.29px;color:#2f3440;transform:scaleX(0.9383);">Physical</div>
<div class="t" style="left:1898.8px;top:903.0px;font-size:17.43px;color:#2f3440;transform:scaleX(1.0190);">Infrastruct</div>
<div class="t" style="left:1907.6px;top:928.2px;font-size:17.43px;color:#2f3440;transform:scaleX(0.9096);">-ure an...</div>
<div class="t" style="left:2003.6px;top:878.4px;font-size:17.29px;color:#2f3440;transform:scaleX(0.9841);">Urban</div>
<div class="t" style="left:1986.1px;top:903.0px;font-size:17.43px;color:#2f3440;transform:scaleX(0.9585);">Developm-</div>
<div class="t" style="left:2015.0px;top:928.2px;font-size:17.43px;color:#2f3440;transform:scaleX(0.9811);">ent</div>
<div class="t" style="left:2086.3px;top:878.4px;font-size:17.29px;color:#2f3440;transform:scaleX(0.9535);">Energy,</div>
<div class="t" style="left:2090.9px;top:903.0px;font-size:17.43px;color:#2f3440;transform:scaleX(0.9787);">Water</div>
<div class="t" style="left:2073.4px;top:928.2px;font-size:17.43px;color:#2f3440;transform:scaleX(0.8948);">Resource...</div>
<div class="t" style="left:2180.1px;top:878.4px;font-size:17.29px;color:#2f3440;transform:scaleX(0.9966);">Water</div>
<div class="t" style="left:2178.3px;top:903.0px;font-size:17.43px;color:#2f3440;transform:scaleX(0.9230);">Supply</div>
<div class="t" style="left:2266.8px;top:878.4px;font-size:17.29px;color:#2f3440;transform:scaleX(0.9831);">Home</div>
<div class="t" style="left:2265.4px;top:903.0px;font-size:17.43px;color:#2f3440;transform:scaleX(0.9714);">Affairs</div>
<div class="a" style="left:370.0px;top:960.0px;width:600.0px;height:70.0px;background:rgba(70,120,230,0.22);filter:blur(24px);border-radius:30px;"></div>
<div class="a" style="left:280.0px;top:740.0px;width:50.0px;height:260.0px;background:rgba(70,120,230,0.13);filter:blur(28px);border-radius:30px;"></div>
<div class="a" style="left:311.8px;top:590.9px;width:742.8px;height:421.1px;background:#fff;border-radius:9px;box-shadow:0 2px 12px rgba(60,90,160,0.05);"></div>
<div class="t" style="left:370.2px;top:642.9px;font-size:32.00px;font-weight:bold;color:#262b35;transform:scaleX(0.8863);">Projects based on priority</div>
<div class="a" style="left:372.0px;top:732.0px;width:75.0px;height:166.0px;background:#9ba3b0;"></div>
<div class="a" style="left:486.0px;top:852.0px;width:75.2px;height:45.5px;background:#9ba3b0;"></div>
<div class="a" style="left:600.2px;top:895.6px;width:75.1px;height:2.4px;background:#9ba3b0;"></div>
<div class="a" style="left:714.4px;top:895.6px;width:75.1px;height:2.4px;background:#9ba3b0;"></div>
<div class="a" style="left:828.5px;top:888.6px;width:75.5px;height:9.9px;background:#9ba3b0;"></div>
<div class="t" style="left:384.4px;top:708.5px;font-size:20.43px;color:#6b7a90;transform:scaleX(0.9977);">3,463</div>
<div class="t" style="left:507.2px;top:828.1px;font-size:20.86px;color:#6b7a90;transform:scaleX(0.9068);">818</div>
<div class="t" style="left:622.6px;top:873.3px;font-size:20.00px;color:#6b7a90;transform:scaleX(0.9809);">32</div>
<div class="t" style="left:740.4px;top:873.3px;font-size:20.00px;color:#6b7a90;transform:scaleX(0.9854);">37</div>
<div class="t" style="left:848.7px;top:864.7px;font-size:20.86px;color:#6b7a90;transform:scaleX(0.8709);">183</div>
<div class="t" style="left:364.1px;top:908.5px;font-size:23.00px;color:#2f3440;transform:scaleX(0.9657);">Priority 1</div>
<div class="t" style="left:478.0px;top:908.5px;font-size:23.00px;color:#2f3440;transform:scaleX(0.9859);">Priority 2</div>
<div class="t" style="left:608.3px;top:908.5px;font-size:23.00px;color:#2f3440;transform:scaleX(0.9089);">Game</div>
<div class="t" style="left:597.8px;top:941.3px;font-size:22.14px;color:#2f3440;transform:scaleX(0.9826);">changer</div>
<div class="t" style="left:711.5px;top:908.5px;font-size:23.00px;color:#2f3440;transform:scaleX(0.9881);">National</div>
<div class="t" style="left:727.7px;top:941.3px;font-size:22.14px;color:#2f3440;transform:scaleX(0.9733);">Pride</div>
<div class="t" style="left:836.2px;top:908.5px;font-size:23.00px;color:#2f3440;transform:scaleX(0.9883);">Other</div>
<div class="a" style="left:407.3px;top:1042.0px;width:742.1px;height:61.6px;background:linear-gradient(#f4f7fd,#fff);border:1.8px solid #2f6ae0;border-radius:5px;"></div>
<svg class="a" style="left:420.0px;top:1057.0px;" width="31" height="31" viewBox="0 0 31 31"><circle cx="12" cy="12" r="8.8" fill="none" stroke="#1f2430" stroke-width="2.8"/><path d="M18.3 18.3 L27.5 27.5" stroke="#1f2430" stroke-width="3" stroke-linecap="butt"/></svg>
<div class="t" style="left:463.2px;top:1063.5px;font-size:22.57px;color:#9aa5b5;transform:scaleX(1.0079);">Search by typing project id or project title or budget code ...</div>
<svg class="a" style="left:1232.0px;top:1037.0px;" width="72" height="72" viewBox="0 0 72 72"><path d="M36 36 L36.00 0.20 A35.8 35.8 0 1 1 33.13 71.68 Z" fill="#c9cdd5"/><path d="M36 36 L33.13 71.68 A35.8 35.8 0 0 1 36.00 0.20 Z" fill="#9ba2ae"/></svg>
<svg class="a" style="left:1632.0px;top:1037.0px;" width="72" height="72" viewBox="0 0 72 72"><path d="M36 36 L49.70 2.93 A35.8 35.8 0 1 1 36.00 0.20 Z" fill="#ee8181"/><path d="M36 36 L36.00 0.20 A35.8 35.8 0 0 1 43.75 1.05 Z" fill="#f7b87d"/><path d="M36 36 L43.75 1.05 A35.8 35.8 0 0 1 49.70 2.93 Z" fill="#84c36c"/></svg>
<div class="t" style="left:1318.7px;top:1048.7px;font-size:22.57px;font-weight:bold;color:#262b35;transform:scaleX(0.8763);">49.90%</div>
<div class="t" style="left:1393.0px;top:1048.7px;font-size:22.57px;color:#2f3440;transform:scaleX(0.8574);">Year-on-year projects</div>
<div class="t" style="left:1317.7px;top:1079.0px;font-size:17.14px;color:#2f3440;transform:scaleX(0.9693);">(746)</div>
<div class="a" style="left:1718.0px;top:1056.3px;width:8.6px;height:8.6px;background:#ef8282;border-radius:50%;"></div>
<div class="t" style="left:1733.7px;top:1048.7px;font-size:22.57px;font-weight:bold;color:#262b35;transform:scaleX(0.8671);">93.40%</div>
<div class="t" style="left:1806.3px;top:1048.7px;font-size:22.57px;color:#2f3440;transform:scaleX(0.9089);">draft</div>
<div class="t" style="left:1717.0px;top:1079.0px;font-size:17.14px;color:#2f3440;transform:scaleX(0.9742);">(5,307)</div>
<div class="a" style="left:1865.2px;top:1056.3px;width:8.6px;height:8.6px;background:#f5b47a;border-radius:50%;"></div>
<div class="t" style="left:1880.0px;top:1048.7px;font-size:22.57px;font-weight:bold;color:#262b35;transform:scaleX(0.8042);">4.21%</div>
<div class="t" style="left:1938.7px;top:1048.7px;font-size:22.57px;color:#2f3440;transform:scaleX(0.9071);">Verfification</div>
<div class="t" style="left:1864.1px;top:1079.0px;font-size:17.14px;color:#2f3440;transform:scaleX(0.9406);">(239)</div>
<div class="a" style="left:2061.2px;top:1056.3px;width:8.6px;height:8.6px;background:#7ec46c;border-radius:50%;"></div>
<div class="t" style="left:2076.0px;top:1048.7px;font-size:22.57px;font-weight:bold;color:#262b35;transform:scaleX(0.8246);">2.39%</div>
<div class="t" style="left:2136.4px;top:1048.7px;font-size:22.57px;color:#2f3440;transform:scaleX(0.9020);">submit</div>
<div class="t" style="left:2060.1px;top:1079.0px;font-size:17.14px;color:#2f3440;transform:scaleX(0.8752);">(136)</div>
<div class="t" style="left:406.4px;top:1155.2px;font-size:21.57px;color:#6b7689;transform:scaleX(0.9298);">Filter applied.</div>
<div class="a" style="left:407.3px;top:1186.5px;width:623.7px;height:40.7px;background:#c9ced8;border-radius:6px;"></div>
<svg class="a" style="left:424.6px;top:1200.8px;" width="13" height="13" viewBox="0 0 13 13"><path d="M0.8 0.8 L11.799999999999965 11.800000000000136 M11.799999999999965 0.8 L0.8 11.800000000000136" stroke="#262b35" stroke-width="1.8"/></svg>
<div class="t" style="left:447.3px;top:1196.1px;font-size:21.14px;color:#262b35;transform:scaleX(0.9211);">Hetauda-Dhalkebar-Inaruwa 400kV Substation Expansion Project</div>
<div class="a" style="left:1039.5px;top:1186.5px;width:172.1px;height:40.7px;background:#c9ced8;border-radius:6px;"></div>
<svg class="a" style="left:1057.4px;top:1200.8px;" width="12" height="13" viewBox="0 0 12 13"><path d="M0.8 0.8 L11.599999999999863 11.800000000000136 M11.599999999999863 0.8 L0.8 11.800000000000136" stroke="#262b35" stroke-width="1.8"/></svg>
<div class="t" style="left:1080.4px;top:1197.4px;font-size:19.29px;color:#262b35;transform:scaleX(1.0471);">Construction</div>
<div class="a" style="left:1224.5px;top:1186.5px;width:173.3px;height:40.7px;background:#c9ced8;border-radius:6px;"></div>
<svg class="a" style="left:1242.5px;top:1200.8px;" width="11" height="13" viewBox="0 0 11 13"><path d="M0.8 0.8 L10.60000000000009 11.800000000000136 M10.60000000000009 0.8 L0.8 11.800000000000136" stroke="#262b35" stroke-width="1.8"/></svg>
<div class="t" style="left:1264.8px;top:1197.4px;font-size:19.29px;color:#262b35;transform:scaleX(1.0085);">New Projects</div>
<div class="t" style="left:411.5px;top:1274.9px;font-size:16.14px;color:#7b8494;transform:scaleX(0.8735);">PROJECT ID</div>
<svg class="a" style="left:509.6px;top:1278.5px;" width="8" height="5" viewBox="0 0 8 5"><path d="M0 5 L4.2 0 L8.4 5 Z" fill="#2b303a"/></svg>
<div class="t" style="left:520.2px;top:1274.9px;font-size:16.14px;color:#7b8494;transform:scaleX(0.8373);">PROJECT</div>
<svg class="a" style="left:1210.8px;top:1278.5px;" width="9" height="5" viewBox="0 0 9 5"><path d="M0 5 L4.3 0 L8.6 5 Z" fill="#2b303a"/></svg>
<div class="t" style="left:1224.4px;top:1274.9px;font-size:16.14px;color:#7b8494;transform:scaleX(0.9196);">PROGRAM</div>
<svg class="a" style="left:1586.3px;top:1278.5px;" width="9" height="5" viewBox="0 0 9 5"><path d="M0 5 L4.4 0 L8.7 5 Z" fill="#2b303a"/></svg>
<div class="t" style="left:1598.3px;top:1274.9px;font-size:16.14px;color:#7b8494;transform:scaleX(0.9316);">MINISTRY</div>
<svg class="a" style="left:1992.5px;top:1278.5px;" width="9" height="5" viewBox="0 0 9 5"><path d="M0 5 L4.4 0 L8.8 5 Z" fill="#2b303a"/></svg>
<div class="t" style="left:2008.0px;top:1274.9px;font-size:16.14px;color:#7b8494;transform:scaleX(0.8926);">AGENCY</div>
<svg class="a" style="left:2203.6px;top:1278.5px;" width="9" height="5" viewBox="0 0 9 5"><path d="M0 5 L4.4 0 L8.8 5 Z" fill="#2b303a"/></svg>
<div class="t" style="left:2214.1px;top:1274.9px;font-size:16.14px;color:#7b8494;transform:scaleX(0.9379);">DEPARTMENT</div>
<div class="a" style="left:408.8px;top:1303.0px;width:2026.2px;height:260.0px;background:#fff;border-radius:8px;"></div>
<div class="t" style="left:428.4px;top:1328.7px;font-size:19.57px;font-weight:bold;color:#8a8f99;transform:scaleX(0.9349);">5473</div>
<div class="t" style="left:520.0px;top:1327.2px;font-size:22.43px;font-weight:bold;color:#252a35;transform:scaleX(0.9836);">Radha Krishna Water Quality Improvement Project</div>
<div class="t" style="left:1224.3px;top:1328.2px;font-size:20.14px;color:#a2a8b2;transform:scaleX(0.9749);">Program not available</div>
<div class="t" style="left:1598.2px;top:1328.2px;font-size:20.14px;color:#5d6470;transform:scaleX(1.0047);">Nepal Electricity Authority</div>
<div class="t" style="left:2007.0px;top:1328.2px;font-size:20.14px;color:#5d6470;transform:scaleX(0.9682);">pudbc, dhankuta</div>
<div class="t" style="left:2214.0px;top:1328.2px;font-size:20.14px;color:#a2a8b2;transform:scaleX(0.9758);">Dept. not available</div>
<div class="a" style="left:521.0px;top:1356.7px;width:69.0px;height:30.6px;background:#ee8080;border-radius:16px;"></div>
<div class="t" style="left:529.1px;top:1364.5px;font-size:16.71px;font-weight:bold;color:#fff;transform:scaleX(0.8902);">DRAFT</div>
<div class="t" style="left:597.6px;top:1365.4px;font-size:16.43px;color:#6b7280;transform:scaleX(0.9950);">Budget code: 347001</div>
<div class="a" style="left:759.3px;top:1364.0px;width:1.0px;height:19.0px;background:#c8ccd4;"></div>
<div class="t" style="left:767.4px;top:1365.4px;font-size:16.43px;color:#6b7280;transform:scaleX(0.9816);">Last updated: Jan 24, 2020</div>
<div class="t" style="left:428.4px;top:1421.4px;font-size:19.57px;font-weight:bold;color:#8a8f99;transform:scaleX(0.9349);">5473</div>
<div class="t" style="left:520.0px;top:1419.9px;font-size:22.43px;font-weight:bold;color:#252a35;transform:scaleX(0.9836);">Radha Krishna Water Quality Improvement Project</div>
<div class="t" style="left:1224.3px;top:1420.9px;font-size:20.14px;color:#a2a8b2;transform:scaleX(0.9749);">Program not available</div>
<div class="t" style="left:1598.2px;top:1420.9px;font-size:20.14px;color:#5d6470;transform:scaleX(1.0047);">Nepal Electricity Authority</div>
<div class="t" style="left:2007.0px;top:1420.9px;font-size:20.14px;color:#5d6470;transform:scaleX(0.9682);">pudbc, dhankuta</div>
<div class="t" style="left:2214.0px;top:1420.9px;font-size:20.14px;color:#a2a8b2;transform:scaleX(0.9758);">Dept. not available</div>
<div class="a" style="left:521.0px;top:1449.4px;width:69.0px;height:30.6px;background:#ee8080;border-radius:16px;"></div>
<div class="t" style="left:529.1px;top:1457.2px;font-size:16.71px;font-weight:bold;color:#fff;transform:scaleX(0.8902);">DRAFT</div>
<div class="t" style="left:597.6px;top:1458.1px;font-size:16.43px;color:#6b7280;transform:scaleX(0.9950);">Budget code: 347001</div>
<div class="a" style="left:759.3px;top:1456.7px;width:1.0px;height:19.0px;background:#c8ccd4;"></div>
<div class="t" style="left:767.4px;top:1458.1px;font-size:16.43px;color:#6b7280;transform:scaleX(0.9816);">Last updated: Jan 24, 2020</div>
<div class="t" style="left:428.4px;top:1514.1px;font-size:19.57px;font-weight:bold;color:#8a8f99;transform:scaleX(0.9349);">5473</div>
<div class="t" style="left:520.0px;top:1512.6px;font-size:22.43px;font-weight:bold;color:#252a35;transform:scaleX(0.9836);">Radha Krishna Water Quality Improvement Project</div>
<div class="t" style="left:1224.3px;top:1513.6px;font-size:20.14px;color:#a2a8b2;transform:scaleX(0.9749);">Program not available</div>
<div class="t" style="left:1598.2px;top:1513.6px;font-size:20.14px;color:#5d6470;transform:scaleX(1.0047);">Nepal Electricity Authority</div>
<div class="t" style="left:2007.0px;top:1513.6px;font-size:20.14px;color:#5d6470;transform:scaleX(0.9682);">pudbc, dhankuta</div>
<div class="t" style="left:2214.0px;top:1513.6px;font-size:20.14px;color:#a2a8b2;transform:scaleX(0.9758);">Dept. not available</div>
<div class="a" style="left:262.0px;top:1430.0px;width:170.0px;height:80.0px;background:rgba(50,110,240,0.5);filter:blur(30px);border-radius:40px;"></div>
<div class="a" style="left:237.6px;top:1384.6px;width:213.6px;height:91.8px;background:#2563dd;border-radius:46px;"></div>
<div class="a" style="left:285.8px;top:1419.3px;width:35.2px;height:4.6px;background:#fff;"></div>
<div class="a" style="left:292.4px;top:1428.3px;width:21.8px;height:4.5px;background:#fff;"></div>
<div class="a" style="left:299.0px;top:1437.1px;width:8.9px;height:4.4px;background:#fff;"></div>
<div class="t" style="left:332.3px;top:1416.1px;font-size:27.71px;color:#fff;transform:scaleX(0.8653);-webkit-text-stroke:0.5px #fff;">FILTER</div>
<div class="a" style="left:2315.0px;top:1445.0px;width:270.0px;height:80.0px;background:rgba(95,105,125,0.6);filter:blur(28px);border-radius:40px;"></div>
<div class="a" style="left:2291.0px;top:1395.4px;width:327.6px;height:96.3px;background:#2b2f38;border-radius:48px;"></div>
<svg class="a" style="left:2340.0px;top:1425.0px;" width="42" height="42" viewBox="0 0 42 42"><path d="M37.2 9.2 V4.05 H3.85 V37.15 H37.2 V31.2" fill="none" stroke="#fff" stroke-width="3.7"/><rect x="16.5" y="18.9" width="15" height="3.8" fill="#fff"/><path d="M31.3 14.8 L39.4 20.8 L31.3 26.6 Z" fill="#fff"/></svg>
<div class="t" style="left:2390.4px;top:1430.5px;font-size:32.43px;color:#fff;transform:scaleX(0.8165);-webkit-text-stroke:0.4px #fff;">EXPORT DATA</div>
</body></html>
